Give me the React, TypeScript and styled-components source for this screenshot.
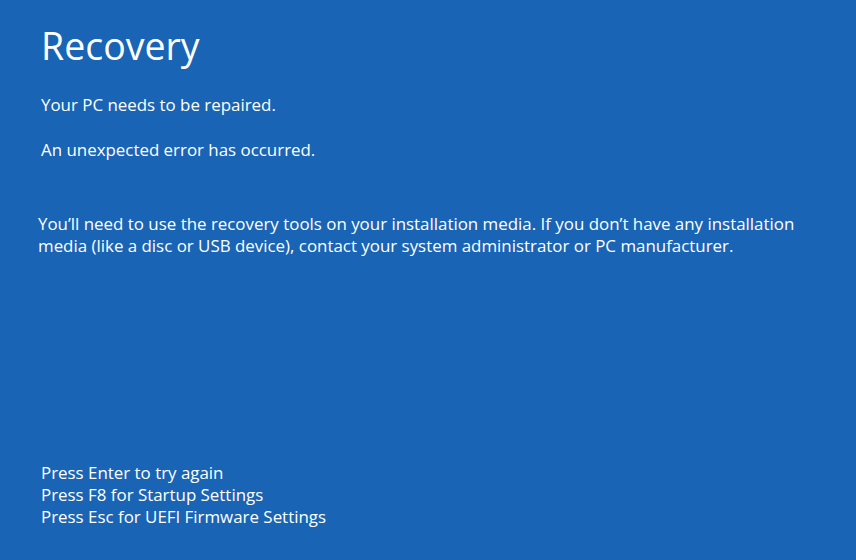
import styled, { createGlobalStyle } from "styled-components";

const GlobalStyle = createGlobalStyle`
  html, body {
    margin: 0;
    padding: 0;
    background: #1964b4;
  }
`;

const Screen = styled.div`
  width: 856px;
  height: 560px;
  box-sizing: border-box;
  background: #1964b4;
  color: #ffffff;
  font-family: "Open Sans", "Noto Sans", sans-serif;
  display: flex;
  flex-direction: column;
  padding: 22px 0 0 41px;
`;

const Title = styled.h1`
  margin: 0;
  font-size: 37.5px;
  font-weight: 400;
  line-height: 48px;
`;

const Line = styled.p<{ $gap?: number }>`
  margin: ${(p) => p.$gap ?? 0}px 0 0;
  font-size: 16.9px;
  line-height: 22px;
`;

const Paragraph = styled.p`
  margin: 52px 0 0 -3px;
  font-size: 16.9px;
  line-height: 22px;
  max-width: 800px;
`;

const Keys = styled.div`
  margin-top: auto;
  margin-bottom: 32px;
  display: flex;
  flex-direction: column;
`;

export default function App() {
  return (
    <>
      <GlobalStyle />
      <Screen>
        <Title>Recovery</Title>
        <Line $gap={24}>Your PC needs to be repaired.</Line>
        <Line $gap={23}>An unexpected error has occurred.</Line>
        <Paragraph>
          You’ll need to use the recovery tools on your installation media. If
          you don’t have any installation media (like a disc or USB device),
          contact your system administrator or PC manufacturer.
        </Paragraph>
        <Keys>
          <Line>Press Enter to try again</Line>
          <Line>Press F8 for Startup Settings</Line>
          <Line>Press Esc for UEFI Firmware Settings</Line>
        </Keys>
      </Screen>
    </>
  );
}
